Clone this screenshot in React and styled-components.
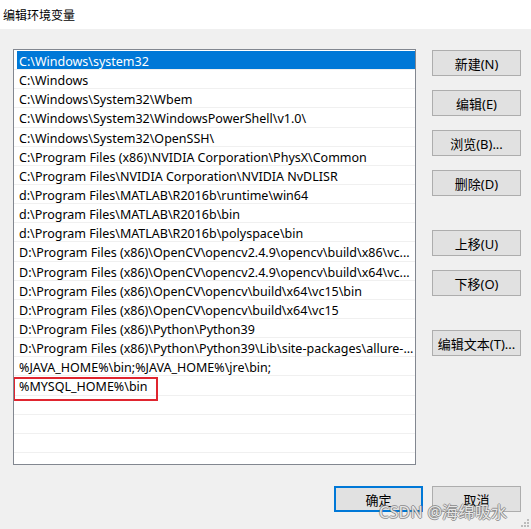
import React from 'react';
import styled, { createGlobalStyle } from 'styled-components';

const GlobalStyle = createGlobalStyle`
  html, body {
    margin: 0;
    padding: 0;
    background: #f0f0f0;
  }
  body {
    font-family: "Noto Sans", "Noto Sans CJK SC", sans-serif;
  }
`;

const paths = [
  'C:\\Windows\\system32',
  'C:\\Windows',
  'C:\\Windows\\System32\\Wbem',
  'C:\\Windows\\System32\\WindowsPowerShell\\v1.0\\',
  'C:\\Windows\\System32\\OpenSSH\\',
  'C:\\Program Files (x86)\\NVIDIA Corporation\\PhysX\\Common',
  'C:\\Program Files\\NVIDIA Corporation\\NVIDIA NvDLISR',
  'd:\\Program Files\\MATLAB\\R2016b\\runtime\\win64',
  'd:\\Program Files\\MATLAB\\R2016b\\bin',
  'd:\\Program Files\\MATLAB\\R2016b\\polyspace\\bin',
  'D:\\Program Files (x86)\\OpenCV\\opencv2.4.9\\opencv\\build\\x86\\vc...',
  'D:\\Program Files (x86)\\OpenCV\\opencv2.4.9\\opencv\\build\\x64\\vc...',
  'D:\\Program Files (x86)\\OpenCV\\opencv\\build\\x64\\vc15\\bin',
  'D:\\Program Files (x86)\\OpenCV\\opencv\\build\\x64\\vc15',
  'D:\\Program Files (x86)\\Python\\Python39',
  'D:\\Program Files (x86)\\Python\\Python39\\Lib\\site-packages\\allure-...',
  '%JAVA_HOME%\\bin;%JAVA_HOME%\\jre\\bin;',
  '%MYSQL_HOME%\\bin',
];

const TOTAL_ROWS = 22;

const Dialog = styled.div`
  position: relative;
  width: 531px;
  height: 529px;
  background: #f0f0f0;
  display: flex;
  flex-direction: column;
  overflow: hidden;
`;

const TitleBar = styled.div`
  height: 29px;
  background: #fff;
  display: flex;
  align-items: center;
  padding-left: 3px;
  font-family: "Noto Sans CJK SC", sans-serif;
  font-size: 12px;
  color: #000;
`;

const Content = styled.div`
  padding: 20px 10px 0 13px;
  display: flex;
  flex-direction: column;
`;

const Main = styled.div`
  display: flex;
  gap: 16px;
`;

const ListBox = styled.div`
  box-sizing: border-box;
  width: 404px;
  height: 416px;
  border: 1px solid #828790;
  background: #fff;
  padding-top: 1px;
  overflow: hidden;
`;

const Row = styled.div`
  position: relative;
  box-sizing: border-box;
  height: 19.15px;
  border-bottom: 1px solid #f0f0f0;
  padding-left: 3px;
  display: flex;
`;

const Label = styled.div`
  flex: 1;
  box-sizing: border-box;
  padding: 1px 0 0 2px;
  font-size: 12.5px;
  line-height: 19px;
  white-space: nowrap;
  overflow: hidden;
  color: ${p => (p.$selected ? '#fff' : '#000')};
  background: ${p => (p.$selected ? '#0078d7' : 'transparent')};
`;

const Marker = styled.div`
  position: absolute;
  top: 1px;
  left: -1px;
  width: 145px;
  height: 24px;
  box-sizing: border-box;
  border: 2px solid #e0252f;
  pointer-events: none;
`;

const Side = styled.div`
  display: flex;
  flex-direction: column;
  gap: 14px;
  padding-top: 1px;
`;

const Button = styled.button`
  box-sizing: border-box;
  width: 89px;
  height: 26px;
  margin-top: ${p => (p.$spaced ? '20px' : '0')};
  background: #e1e1e1;
  border: ${p => (p.$primary ? '2px solid #0078d7' : '1px solid #adadad')};
  font-family: "Noto Sans", "Noto Sans CJK SC", sans-serif;
  font-size: 13px;
  color: #000;
  padding: 0;
  display: flex;
  align-items: center;
  justify-content: center;
`;

const Footer = styled.div`
  display: flex;
  justify-content: flex-end;
  gap: 9px;
  margin-top: 21px;
`;

const Watermark = styled.div`
  position: absolute;
  left: 379px;
  top: 499px;
  font-family: "Noto Sans", "Noto Sans CJK SC", sans-serif;
  font-size: 16px;
  letter-spacing: 0.3px;
  color: rgba(250, 250, 250, 0.85);
  text-shadow:
    1px 0 0 rgba(120, 120, 120, 0.7),
    -1px 0 0 rgba(120, 120, 120, 0.7),
    0 1px 0 rgba(120, 120, 120, 0.7),
    0 -1px 0 rgba(120, 120, 120, 0.7);
  pointer-events: none;
`;

const Grip = styled.svg`
  position: absolute;
  right: 2px;
  bottom: 2px;
`;

export default function App() {
  const rows = [];
  for (let i = 0; i < TOTAL_ROWS; i++) {
    const text = paths[i];
    rows.push(
      <Row key={i}>
        <Label $selected={i === 0}>{text || '\u00a0'}</Label>
        {i === 17 && <Marker />}
      </Row>
    );
  }

  return (
    <>
      <GlobalStyle />
      <Dialog>
        <TitleBar>编辑环境变量</TitleBar>
        <Content>
          <Main>
            <ListBox>{rows}</ListBox>
            <Side>
              <Button>新建(N)</Button>
              <Button>编辑(E)</Button>
              <Button>浏览(B)...</Button>
              <Button>删除(D)</Button>
              <Button $spaced>上移(U)</Button>
              <Button>下移(O)</Button>
              <Button $spaced>编辑文本(T)...</Button>
            </Side>
          </Main>
          <Footer>
            <Button $primary>确定</Button>
            <Button>取消</Button>
          </Footer>
        </Content>
        <Watermark>CSDN @海绵吸水</Watermark>
        <Grip width="8" height="8" viewBox="0 0 8 8">
          <rect x="6" y="0" width="2" height="2" fill="#bcbcbc" />
          <rect x="3" y="3" width="2" height="2" fill="#bcbcbc" />
          <rect x="6" y="3" width="2" height="2" fill="#bcbcbc" />
          <rect x="0" y="6" width="2" height="2" fill="#bcbcbc" />
          <rect x="3" y="6" width="2" height="2" fill="#bcbcbc" />
          <rect x="6" y="6" width="2" height="2" fill="#bcbcbc" />
        </Grip>
      </Dialog>
    </>
  );
}
